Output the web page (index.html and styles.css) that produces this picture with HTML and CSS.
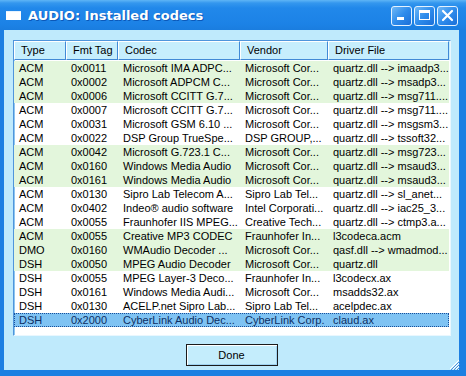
FILE: index.html
```html
<!DOCTYPE html>
<html>
<head>
<meta charset="utf-8">
<link rel="stylesheet" href="styles.css">
</head>
<body>
<div class="win">
  <div class="titlebar">
    <div class="tb-icon"></div>
    <div class="tb-title">AUDIO: Installed codecs</div>
    <div class="tb-btns">
      <div class="tbtn"><svg width="19" height="19" viewBox="0 0 19 19"><rect x="5" y="11" width="7" height="3" fill="#fff"/></svg></div>
      <div class="tbtn"><svg width="19" height="19" viewBox="0 0 19 19"><rect x="4.5" y="4.5" width="10" height="9" fill="none" stroke="#fff" stroke-width="1"/><rect x="4" y="4" width="11" height="3" fill="#fff"/></svg></div>
      <div class="tbtn"><svg width="19" height="19" viewBox="0 0 19 19"><path d="M5 5 L14 14 M14 5 L5 14" stroke="#fff" stroke-width="2.2" stroke-linecap="round"/></svg></div>
    </div>
  </div>
  <div class="body">
    <div class="list">
      <div class="hdr">
        <div class="hc">Type</div>
        <div class="hc">Fmt Tag</div>
        <div class="hc">Codec</div>
        <div class="hc">Vendor</div>
        <div class="hc">Driver File</div>
      </div>
      <div class="rows">
        <div class="row g"><span>ACM</span><span>0x0011</span><span>Microsoft IMA ADPC...</span><span>Microsoft Cor...</span><span>quartz.dll --&gt; imaadp3...</span></div>
        <div class="row g"><span>ACM</span><span>0x0002</span><span>Microsoft ADPCM C...</span><span>Microsoft Cor...</span><span>quartz.dll --&gt; msadp3...</span></div>
        <div class="row g"><span>ACM</span><span>0x0006</span><span>Microsoft CCITT G.7...</span><span>Microsoft Cor...</span><span>quartz.dll --&gt; msg711....</span></div>
        <div class="row"><span>ACM</span><span>0x0007</span><span>Microsoft CCITT G.7...</span><span>Microsoft Cor...</span><span>quartz.dll --&gt; msg711....</span></div>
        <div class="row"><span>ACM</span><span>0x0031</span><span>Microsoft GSM 6.10 ...</span><span>Microsoft Cor...</span><span>quartz.dll --&gt; msgsm3...</span></div>
        <div class="row"><span>ACM</span><span>0x0022</span><span>DSP Group TrueSpe...</span><span>DSP GROUP,...</span><span>quartz.dll --&gt; tssoft32...</span></div>
        <div class="row g"><span>ACM</span><span>0x0042</span><span>Microsoft G.723.1 C...</span><span>Microsoft Cor...</span><span>quartz.dll --&gt; msg723...</span></div>
        <div class="row g"><span>ACM</span><span>0x0160</span><span>Windows Media Audio</span><span>Microsoft Cor...</span><span>quartz.dll --&gt; msaud3...</span></div>
        <div class="row g"><span>ACM</span><span>0x0161</span><span>Windows Media Audio</span><span>Microsoft Cor...</span><span>quartz.dll --&gt; msaud3...</span></div>
        <div class="row"><span>ACM</span><span>0x0130</span><span>Sipro Lab Telecom A...</span><span>Sipro Lab Tel...</span><span>quartz.dll --&gt; sl_anet...</span></div>
        <div class="row"><span>ACM</span><span>0x0402</span><span>Indeo® audio software</span><span>Intel Corporati...</span><span>quartz.dll --&gt; iac25_3...</span></div>
        <div class="row"><span>ACM</span><span>0x0055</span><span>Fraunhofer IIS MPEG...</span><span>Creative Tech...</span><span>quartz.dll --&gt; ctmp3.a...</span></div>
        <div class="row g"><span>ACM</span><span>0x0055</span><span>Creative MP3 CODEC</span><span>Fraunhofer In...</span><span>l3codeca.acm</span></div>
        <div class="row g"><span>DMO</span><span>0x0160</span><span>WMAudio Decoder ...</span><span>Microsoft Cor...</span><span>qasf.dll --&gt; wmadmod...</span></div>
        <div class="row g"><span>DSH</span><span>0x0050</span><span>MPEG Audio Decoder</span><span>Microsoft Cor...</span><span>quartz.dll</span></div>
        <div class="row"><span>DSH</span><span>0x0055</span><span>MPEG Layer-3 Deco...</span><span>Fraunhofer In...</span><span>l3codecx.ax</span></div>
        <div class="row"><span>DSH</span><span>0x0161</span><span>Windows Media Audi...</span><span>Microsoft Cor...</span><span>msadds32.ax</span></div>
        <div class="row"><span>DSH</span><span>0x0130</span><span>ACELP.net Sipro Lab...</span><span>Sipro Lab Tel...</span><span>acelpdec.ax</span></div>
        <div class="row sel"><span>DSH</span><span>0x2000</span><span>CyberLink Audio Dec...</span><span>CyberLink Corp.</span><span>claud.ax</span></div>
      </div>
    </div>
    <div class="btnrow">
      <div class="btn">Done</div>
    </div>
    <svg class="grip" width="11" height="11" viewBox="0 0 11 11">
      <path d="M10 1 L1 10 M10 4 L4 10 M10 7 L7 10" stroke="#ffffff" stroke-width="1"/>
      <path d="M11 2 L2 11 M11 5 L5 11 M11 8 L8 11" stroke="#4c8fd8" stroke-width="1"/>
    </svg>
  </div>
</div>
</body>
</html>
```
FILE: styles.css
```css
html, body {
  margin: 0;
  padding: 0;
  background: #bfeafc;
}
body {
  width: 466px;
  height: 376px;
  overflow: hidden;
  font-family: "Liberation Sans", Arial, sans-serif;
  font-size: 11px;
  color: #000;
}
.win {
  width: 466px;
  height: 376px;
  box-sizing: border-box;
  display: flex;
  flex-direction: column;
  background: #1c7fe2;
}
.titlebar {
  height: 30px;
  flex: none;
  display: flex;
  align-items: center;
  background: linear-gradient(#5fb5f6 0px, #3497ee 3px, #2188ea 8px, #1c82e6 24px, #1a7ddf 30px);
  padding-left: 6px;
  padding-right: 8px;
}
.tb-icon {
  width: 15px;
  height: 8px;
  background: #fff;
  margin-top: 0px;
  margin-right: 7px;
  border-top: 1px solid #e6f3ff;
}
.tb-title {
  font-family: "DejaVu Sans", sans-serif;
  font-weight: bold;
  font-size: 13px;
  color: #fff;
  text-shadow: 1px 1px 0 #0b58b8;
  letter-spacing: 0px;
  flex: 1;
  margin-top: 1px;
}
.tb-btns {
  display: flex;
  gap: 2px;
  margin-top: 1px;
}
.tbtn {
  width: 19px;
  height: 18px;
  border: 1px solid #e4f2ff;
  border-radius: 3px;
  background: linear-gradient(135deg, #6fb8f6 0%, #2e8cec 50%, #1b6fd8 100%);
  display: flex;
  align-items: center;
  justify-content: center;
}
.tbtn svg { display: block; }
.body {
  flex: 1;
  margin: 0 7px 6px 4px;
  background: #bfeafc;
  position: relative;
  display: flex;
  flex-direction: column;
  padding: 10px 8px 0 9px;
}
.list {
  height: 296px;
  box-sizing: border-box;
  border: 1px solid #4f95dc;
  border-right-color: #e9f7fe;
  border-bottom-color: #e9f7fe;
  background: #fff;
  box-shadow: inset 1px 1px 0 #8dc6f0;
  overflow: hidden;
}
.hdr {
  display: grid;
  grid-template-columns: 52px 52px 122px 88px 121px;
  height: 19px;
  background: #c6eefd;
}
.hc {
  box-sizing: border-box;
  border-left: 1px solid #ffffff;
  border-top: 1px solid #ffffff;
  border-right: 1px solid #4189d6;
  border-bottom: 1px solid #4189d6;
  padding-left: 6px;
  line-height: 17px;
  white-space: nowrap;
  overflow: hidden;
}
.rows {
  padding-top: 1px;
}
.row {
  display: grid;
  grid-template-columns: 52px 52px 122px 88px 121px;
  height: 14px;
  line-height: 14px;
  width: 435px;
}
.row span {
  padding-left: 5px;
  white-space: nowrap;
  overflow: hidden;
}
.row.g {
  background: #e3f6dc;
}
.row.sel {
  background: #7fc3f3;
  color: #0d2f63;
  outline: 1px dotted #1a4f9a;
  outline-offset: -1px;
}
.btnrow {
  display: flex;
  justify-content: center;
  padding-top: 8px;
  padding-right: 1px;
}
.btn {
  width: 92px;
  height: 22px;
  box-sizing: border-box;
  border: 1px solid #1b1b1b;
  box-shadow: inset 1px 1px 0 #ffffff, inset -1px -1px 0 #9fd2f0;
  background: #c4edfc;
  text-align: center;
  line-height: 20px;
  font-size: 11px;
}
.grip {
  position: absolute;
  right: -1px;
  bottom: 0px;
}
```
